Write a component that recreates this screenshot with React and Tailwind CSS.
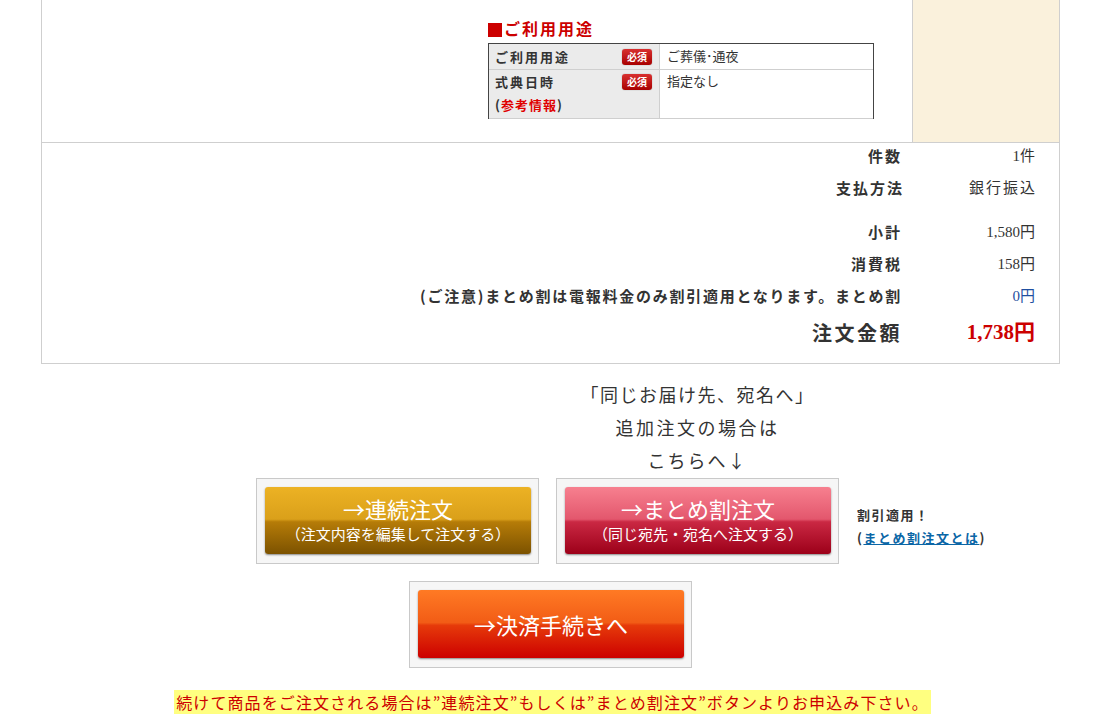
const jp = { fontFamily: '"Noto Sans CJK JP", "Noto Sans", sans-serif' };
const num = { fontFamily: '"Liberation Serif", "Noto Sans CJK JP", serif' };

function Badge() {
  return (
    <span className="inline-flex h-[16px] w-[30px] items-center justify-center rounded-[3px] bg-[linear-gradient(to_bottom,#d83030,#a80000)] text-[10px] font-bold leading-none text-white shadow-[0_0_1px_rgba(0,0,0,0.5)]">
      必須
    </span>
  );
}

function SumRow({ label, value, className = "h-[32px]", labelClass = "text-[15px] font-bold tracking-[2px]", valueClass = "text-[15px] text-[#333]" }) {
  return (
    <div className={"flex items-center justify-end " + className}>
      <div className={"pr-[10px] text-right text-[#333] " + labelClass}>{label}</div>
      <div className={"w-[147px] pr-[24px] text-right " + valueClass} style={num}>
        {value}
      </div>
    </div>
  );
}

function Frame({ children }) {
  return (
    <div className="w-[283px] border border-[#c9c9c9] bg-[#f6f6f6] pb-[9px] pl-[8px] pr-[7px] pt-[8px]">
      {children}
    </div>
  );
}

export default function App() {
  return (
    <div className="min-h-[728px] w-[1105px] bg-white text-[#333]" style={jp}>
      <div className="ml-[41px] w-[1019px] border-x border-b border-[#cfcfcf]">
        {/* top part */}
        <div className="flex h-[143px] border-b border-[#cfcfcf]">
          <div className="flex-1 pl-[446px] pt-[17px]">
            <div className="flex items-center gap-[2px] leading-[22px]">
              <span className="mt-[3px] h-[14px] w-[14px] bg-[#cc0000]" />
              <span className="text-[16px] font-bold tracking-[2px] text-[#cc0000]">ご利用用途</span>
            </div>
            <div className="mt-[4px] w-[386px] border-x border-t border-[#444]">
              <div className="flex h-[26px] border-b border-[#cfcfcf]">
                <div className="flex w-[170px] items-center justify-between bg-[#ebebeb] pl-[6px] pr-[7px]">
                  <span className="text-[13px] font-bold tracking-[2px]">ご利用用途</span>
                  <Badge />
                </div>
                <div className="flex-1 border-l border-[#cfcfcf] pl-[7px] text-[13px] leading-[23px]">ご葬儀･通夜</div>
              </div>
              <div className="flex h-[49px] border-b border-[#cfcfcf]">
                <div className="w-[170px] bg-[#ebebeb] pl-[6px] pr-[7px] pt-[1px]">
                  <div className="flex items-center justify-between">
                    <span className="text-[13px] font-bold leading-[22px] tracking-[2px]">式典日時</span>
                    <Badge />
                  </div>
                  <div className="text-[13px] font-bold leading-[24px] tracking-[1px]">
                    (<span className="text-[#e00000]">参考情報</span>)
                  </div>
                </div>
                <div className="flex-1 border-l border-[#cfcfcf] pl-[7px] text-[13px] leading-[21px]">指定なし</div>
              </div>
            </div>
          </div>
          <div className="w-[147px] border-l border-[#cfcfcf] bg-[#faf1dc]" />
        </div>

        {/* summary */}
        <div className="pb-[9px]">
          <SumRow label="件数" value="1件" className="h-[26px]" />
          <SumRow label="支払方法" value="銀行振込" className="mt-[3px] h-[32px]" valueClass="text-[15px] text-[#333] tracking-[2px] mr-[-2px]" />
          <SumRow label="小計" value="1,580円" className="mt-[12px] h-[32px]" />
          <SumRow label="消費税" value="158円" />
          <SumRow
            label="(ご注意)まとめ割は電報料金のみ割引適用となります。まとめ割"
            value="0円"
            labelClass="text-[15px] font-bold tracking-[1.75px]"
            valueClass="text-[15px] text-[#1f4fa0]"
          />
          <SumRow
            label="注文金額"
            value="1,738円"
            className="h-[42px]"
            labelClass="text-[20px] font-bold tracking-[2.5px]"
            valueClass="text-[21px] font-bold text-[#cc0000]"
          />
        </div>
      </div>

      {/* guidance above the buttons */}
      <div className="mx-auto mt-[14px] grid w-[583px] -translate-x-[5px] grid-cols-[283px_283px] gap-x-[17px]">
        <div />
        <div className="text-center text-[18px] leading-[33px] tracking-[1.5px] text-[#333]">
          <div>「同じお届け先、宛名へ」</div>
          <div className="tracking-[2.5px]">追加注文の場合は</div>
          <div className="tracking-[2px]">こちらへ↓</div>
        </div>
      </div>

      <div className="relative mx-auto mt-[1px] flex w-[583px] -translate-x-[5px] gap-[17px]">
        <Frame>
          <div className="flex h-[67px] flex-col items-center rounded-[3px] bg-[linear-gradient(to_bottom,#ecb224_0%,#daa01a_48%,#b67c08_52%,#7c5200_100%)] pt-[7px] text-white shadow-[0_1px_2px_rgba(0,0,0,0.45)]">
            <div className="text-[22px] leading-[28px]">→連続注文</div>
            <div className="text-[15px] leading-[24px]">（注文内容を編集して注文する）</div>
          </div>
        </Frame>
        <Frame>
          <div className="flex h-[67px] flex-col items-center rounded-[3px] bg-[linear-gradient(to_bottom,#f7808f_0%,#e3576d_48%,#ca2843_52%,#9c0019_100%)] pt-[7px] text-white shadow-[0_1px_2px_rgba(0,0,0,0.45)]">
            <div className="text-[22px] leading-[28px]">→まとめ割注文</div>
            <div className="text-[15px] leading-[24px]">（同じ宛先・宛名へ注文する）</div>
          </div>
        </Frame>
        <div className="absolute left-full top-[25px] ml-[18px] whitespace-nowrap text-[13px] font-bold leading-[23px] tracking-[1.5px]">
          <div>割引適用！</div>
          <div>
            (<a href="#" className="text-[#0b66a6] underline">まとめ割注文とは</a>)
          </div>
        </div>
      </div>

      <div className="mt-[17px] flex justify-center">
        <div className="-translate-x-[2px]">
          <Frame>
            <div className="flex h-[68px] items-center justify-center rounded-[3px] bg-[linear-gradient(to_bottom,#ff7a24_0%,#f25c16_48%,#e63a0a_52%,#cc0000_100%)] text-[22px] text-white shadow-[0_1px_2px_rgba(0,0,0,0.45)]">
              →決済手続きへ
            </div>
          </Frame>
        </div>
      </div>

      <div className="mt-[22px] flex justify-center">
        <span className="bg-[#ffff80] px-[2px] text-[16px] leading-[24px] tracking-[1.1px] text-[#cc0000]">
          続けて商品をご注文される場合は”連続注文”もしくは”まとめ割注文”ボタンよりお申込み下さい。
        </span>
      </div>
    </div>
  );
}
